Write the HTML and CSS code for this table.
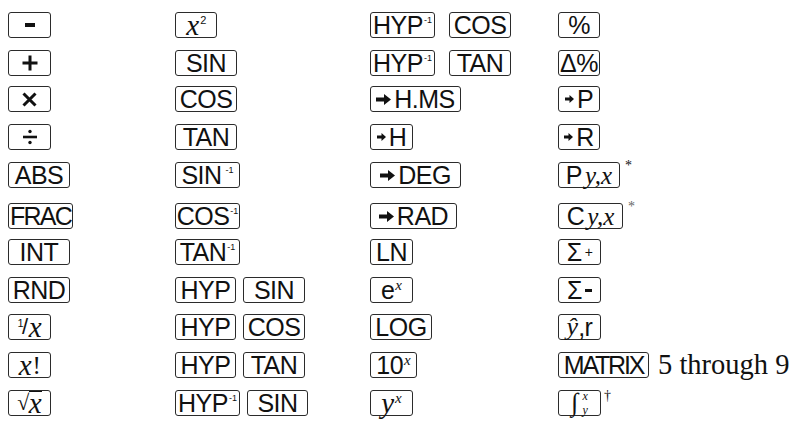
FILE: index.html
```html
<!DOCTYPE html>
<html>
<head>
<meta charset="utf-8">
<link rel="stylesheet" href="styles.css">
</head>
<body>
<div class="table">
  <!-- row 1 -->
  <div class="cell"><span class="key s"><span class="minus"></span></span></div>
  <div class="cell"><span class="key s42"><span class="var">x</span><span class="sup2">2</span></span></div>
  <div class="cell pair wide"><span class="key l">HYP<span class="sup">-1</span></span><span class="key m">COS</span></div>
  <div class="cell"><span class="key s42">%</span></div>
  <!-- row 2 -->
  <div class="cell"><span class="key s"><svg width="16" height="16" viewBox="0 0 16 16"><path d="M8 0.5v15M0.5 8h15" stroke="#111" stroke-width="3"/></svg></span></div>
  <div class="cell"><span class="key m">SIN</span></div>
  <div class="cell pair wide"><span class="key l">HYP<span class="sup">-1</span></span><span class="key m">TAN</span></div>
  <div class="cell"><span class="key s42">Δ%</span></div>
  <!-- row 3 -->
  <div class="cell"><span class="key s"><svg width="15" height="15" viewBox="0 0 15 15"><path d="M1.5 1.5l12 12M13.5 1.5l-12 12" stroke="#111" stroke-width="3"/></svg></span></div>
  <div class="cell"><span class="key m">COS</span></div>
  <div class="cell"><span class="key xl"><svg class="arrow" width="15" height="11" viewBox="0 0 15 11"><path d="M0 3.5h8V0l7 5.5L8 11V7.5H0z" fill="#111"/></svg>H.MS</span></div>
  <div class="cell"><span class="key s42"><svg class="arrow-s" width="9" height="8" viewBox="0 0 9 8"><path d="M0 2.6h4.5V0L9 4 4.5 8V5.4H0z" fill="#111"/></svg>P</span></div>
  <!-- row 4 -->
  <div class="cell"><span class="key s"><svg width="16" height="16" viewBox="0 0 16 16"><path d="M1 8h14" stroke="#111" stroke-width="2.6"/><circle cx="8" cy="2.5" r="1.7" fill="#111"/><circle cx="8" cy="13.5" r="1.7" fill="#111"/></svg></span></div>
  <div class="cell"><span class="key m">TAN</span></div>
  <div class="cell"><span class="key s"><svg class="arrow-s" width="9" height="8" viewBox="0 0 9 8"><path d="M0 2.6h4.5V0L9 4 4.5 8V5.4H0z" fill="#111"/></svg>H</span></div>
  <div class="cell"><span class="key s42"><svg class="arrow-s" width="9" height="8" viewBox="0 0 9 8"><path d="M0 2.6h4.5V0L9 4 4.5 8V5.4H0z" fill="#111"/></svg>R</span></div>
  <!-- row 5 -->
  <div class="cell"><span class="key m">ABS</span></div>
  <div class="cell"><span class="key l">SIN<span class="sup gap">-1</span></span></div>
  <div class="cell"><span class="key xl"><svg class="arrow" width="15" height="11" viewBox="0 0 15 11"><path d="M0 3.5h8V0l7 5.5L8 11V7.5H0z" fill="#111"/></svg>DEG</span></div>
  <div class="cell"><span class="key m">P<span class="var sm">y,x</span></span><span class="note">*</span></div>
  <!-- row 6 -->
  <div class="cell"><span class="key l tight">FRAC</span></div>
  <div class="cell"><span class="key l">COS<span class="sup">-1</span></span></div>
  <div class="cell"><span class="key rad"><svg class="arrow" width="15" height="11" viewBox="0 0 15 11"><path d="M0 3.5h8V0l7 5.5L8 11V7.5H0z" fill="#111"/></svg>RAD</span></div>
  <div class="cell"><span class="key l">C<span class="var sm">y,x</span></span><span class="note light">*</span></div>
  <!-- row 7 -->
  <div class="cell"><span class="key m">INT</span></div>
  <div class="cell"><span class="key l">TAN<span class="sup">-1</span></span></div>
  <div class="cell"><span class="key s">LN</span></div>
  <div class="cell"><span class="key s">Σ<span class="small-op">+</span></span></div>
  <!-- row 8 -->
  <div class="cell"><span class="key m">RND</span></div>
  <div class="cell pair"><span class="key m61">HYP</span><span class="key m">SIN</span></div>
  <div class="cell"><span class="key s">e<span class="var supx">x</span></span></div>
  <div class="cell"><span class="key s">Σ<span class="small-minus"></span></span></div>
  <!-- row 9 -->
  <div class="cell"><span class="key s"><span class="one">1</span><span class="slash">/</span><span class="var">x</span></span></div>
  <div class="cell pair"><span class="key m61">HYP</span><span class="key m">COS</span></div>
  <div class="cell"><span class="key m">LOG</span></div>
  <div class="cell"><span class="key s"><span class="var hat">ŷ</span>,r</span></div>
  <!-- row 10 -->
  <div class="cell"><span class="key s"><span class="var">x</span><span class="bang">!</span></span></div>
  <div class="cell pair"><span class="key m61">HYP</span><span class="key m">TAN</span></div>
  <div class="cell"><span class="key s47">10<span class="var supx">x</span></span></div>
  <div class="cell"><span class="key xl tight2">MATRIX</span><span class="through">5 through 9</span></div>
  <!-- row 11 -->
  <div class="cell"><span class="key s"><span class="root">√</span><span class="var over">x</span></span></div>
  <div class="cell pair"><span class="key l">HYP<span class="sup">-1</span></span><span class="key m61">SIN</span></div>
  <div class="cell"><span class="key s"><span class="var">y</span><span class="var supx">x</span></span></div>
  <div class="cell"><span class="key s"><span class="var integral">∫</span><span class="limits"><span class="var">x</span><span class="var">y</span></span></span><span class="note dagger">†</span></div>
</div>
</body>
</html>
```

FILE: styles.css
```css
body {
  margin: 0;
  background: #ffffff;
  color: #111111;
  font-family: "Liberation Sans", Arial, sans-serif;
}

.table {
  display: grid;
  grid-template-columns: 167px 195px 188px 1fr;
  grid-template-rows: 38px 36px 38px 38px 41px 36px 38px 37px 38px 38px 33px;
  padding: 12px 0 0 8px;
}

.cell {
  display: flex;
  align-items: flex-start;
}

.pair { gap: 7px; }
.pair.wide { gap: 14px; }

.key {
  box-sizing: border-box;
  height: 26px;
  border: 1.5px solid #2b2b2b;
  border-radius: 3px;
  display: inline-flex;
  align-items: center;
  justify-content: center;
  font-size: 25px;
  letter-spacing: -0.5px;
  line-height: 1;
  white-space: nowrap;
}

.s { width: 43px; }
.s42 { width: 42px; }
.s47 { width: 47px; }
.m { width: 62px; }
.m61 { width: 61px; }
.l { width: 65px; }
.xl { width: 91px; }
.rad { width: 87px; }

.tight { letter-spacing: -1.8px; }
.tight2 { letter-spacing: -2.2px; }

.sup {
  font-size: 9px;
  letter-spacing: 0;
  align-self: flex-start;
  margin-top: 3px;
  margin-left: 1px;
}
.sup.gap { margin-left: 4px; }

.sup2 {
  font-size: 11px;
  align-self: flex-start;
  margin-top: 2px;
  margin-left: 1px;
}

.var {
  font-family: "Liberation Serif", "Times New Roman", serif;
  font-style: italic;
  font-size: 29px;
  letter-spacing: 0;
}
.var.sm { font-size: 25px; margin-left: 3px; }
.var.hat { font-size: 26px; }

.supx {
  font-size: 15px;
  align-self: flex-start;
  margin-top: 0;
  margin-left: 1px;
}

.minus {
  width: 10px;
  height: 4px;
  background: #111;
}

.arrow { margin-right: 3px; }
.arrow-s { margin-right: 3px; }

.small-op {
  font-size: 14px;
  margin-left: 3px;
}
.small-minus {
  width: 7px;
  height: 3px;
  background: #111;
  margin-left: 3px;
}

.one {
  font-size: 11px;
  align-self: flex-start;
  margin-top: 3px;
}
.slash {
  font-size: 22px;
  margin: 0 1px 0 -1px;
}

.bang {
  font-family: "Liberation Serif", serif;
  font-size: 25px;
  margin-left: 1px;
}

.root {
  font-family: "Liberation Serif", serif;
  font-size: 22px;
}
.over {
  border-top: 1.5px solid #111;
  line-height: 0.8;
}

.integral { font-size: 26px; }
.limits {
  display: flex;
  flex-direction: column;
  margin-left: 4px;
}
.limits .var { font-size: 12px; line-height: 14px; }

.note {
  font-family: "Liberation Serif", serif;
  font-size: 14px;
  margin-left: 5px;
  margin-top: -4px;
}
.note.light { color: #666; }
.dagger { margin-left: 3px; margin-top: -2px; }

.through {
  font-family: "Liberation Serif", "Times New Roman", serif;
  font-size: 28.5px;
  margin-left: 9px;
  margin-top: -3px;
}
```
